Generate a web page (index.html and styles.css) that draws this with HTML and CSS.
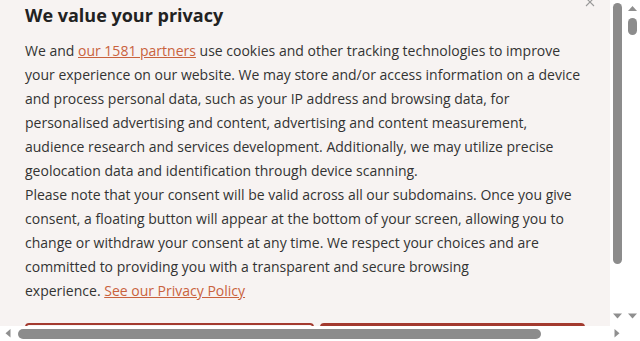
FILE: index.html
```html
<!DOCTYPE html>
<html lang="en">
<head>
<meta charset="utf-8">
<title>Privacy</title>
<link rel="stylesheet" href="styles.css">
</head>
<body>
<div class="screen">
  <div class="viewport">
    <div class="dialog" role="dialog" aria-labelledby="privacy-title">
      <div class="dialog-body">
        <button class="close" aria-label="Close">
          <svg width="10" height="10" viewBox="0 0 10 10"><path d="M1 1 L9 9 M9 1 L1 9" stroke="#9a9a9a" stroke-width="1.1" fill="none"/></svg>
        </button>
        <h2 class="title" id="privacy-title">We value your privacy</h2>
        <div class="text">
          <p>We and <a href="#" class="link">our 1581 partners</a> use cookies and other tracking technologies to improve your experience on our website. We may store and/or access information on a device and process personal data, such as your IP address and browsing data, for personalised advertising and content, advertising and content measurement, audience research and services development. Additionally, we may utilize precise geolocation data and identification through device scanning.</p>
          <p>Please note that your consent will be valid across all our subdomains. Once you give consent, a floating button will appear at the bottom of your screen, allowing you to change or withdraw your consent at any time. We respect your choices and are committed to providing you with a transparent and secure browsing<br>experience. <a href="#" class="link">See our Privacy Policy</a></p>
        </div>
        <div class="actions">
          <button class="btn btn-outline">Manage Preferences</button>
          <button class="btn btn-primary">Accept All</button>
        </div>
      </div>
      <div class="vbar inner-bar">
        <div class="thumb-v inner-thumb"></div>
        <div class="fill"></div>
        <svg class="arrow" width="15" height="15" viewBox="0 0 15 15"><polygon points="3,2.5 12,2.5 7.5,7.5" fill="#8f8f8f"/></svg>
      </div>
    </div>
  </div>
  <div class="vbar outer-bar">
    <svg class="arrow" width="15" height="15" viewBox="0 0 15 15"><polygon points="3,11 12,11 7.5,6" fill="#8f8f8f"/></svg>
    <div class="thumb-v outer-thumb"></div>
    <div class="fill"></div>
    <svg class="arrow" width="15" height="15" viewBox="0 0 15 15"><polygon points="3,2.5 12,2.5 7.5,7.5" fill="#8f8f8f"/></svg>
  </div>
  <div class="hbar">
    <svg class="arrow" width="15" height="15" viewBox="0 0 15 15"><polygon points="10.5,3 10.5,11.5 5.5,7.25" fill="#8f8f8f"/></svg>
    <div class="thumb-h"></div>
    <div class="fill"></div>
    <svg class="arrow" width="15" height="15" viewBox="0 0 15 15"><polygon points="4.5,3 4.5,11.5 9.5,7.25" fill="#8f8f8f"/></svg>
  </div>
  <div class="corner"></div>
</div>
</body>
</html>
```

FILE: styles.css
```css
html, body {
  margin: 0;
  padding: 0;
  background: #ffffff;
  overflow: hidden;
}

.screen {
  display: grid;
  grid-template-columns: 625px 15px;
  grid-template-rows: 326px 15px;
  width: 640px;
  height: 341px;
}

.viewport {
  overflow: hidden;
}

.dialog {
  display: flex;
  height: 326px;
}

.dialog-body {
  position: relative;
  box-sizing: border-box;
  width: 610px;
  height: 326px;
  padding: 3px 25px 0;
  overflow: hidden;
  background: #f7f3f2;
  font-family: "Open Sans", "Liberation Sans", sans-serif;
  color: #333333;
}

.close {
  position: absolute;
  top: -3px;
  left: 585px;
  width: 10px;
  height: 10px;
  padding: 0;
  border: 0;
  background: none;
  line-height: 0;
}

.title {
  margin: 0;
  font-size: 18px;
  line-height: 24px;
  font-weight: 700;
  color: #222222;
}

.text {
  margin-top: 12px;
  font-size: 14px;
  line-height: 24px;
}

.text p {
  margin: 0;
}

.link {
  color: #c9623d;
  text-decoration: underline;
}

.actions {
  display: grid;
  grid-template-columns: 289px 1fr;
  gap: 6px;
  margin-top: 20px;
}

.btn {
  height: 44px;
  border-radius: 4px;
  font-family: "Open Sans", "Liberation Sans", sans-serif;
  font-size: 14px;
  font-weight: 600;
}

.btn-outline {
  border: 2px solid #a33a2f;
  background: transparent;
  color: #a33a2f;
}

.btn-primary {
  border: 2px solid #a33a2f;
  background: #a33a2f;
  color: #ffffff;
}

/* scrollbars */
.vbar {
  display: flex;
  flex-direction: column;
  align-items: center;
  width: 15px;
  background: #ffffff;
}

.inner-bar {
  height: 326px;
}

.fill {
  flex: 1;
}

.arrow {
  display: block;
  flex: none;
}

.thumb-v {
  width: 9px;
  border-radius: 5px;
  background: #8c8c8c;
  flex: none;
}

.inner-thumb {
  margin-top: 3px;
  height: 261px;
}

.outer-thumb {
  margin-top: 3px;
  height: 17px;
}

.hbar {
  display: flex;
  align-items: center;
  height: 15px;
  background: #ffffff;
}

.thumb-h {
  flex: none;
  width: 523px;
  height: 10px;
  margin-left: 3px;
  border-radius: 5px;
  background: #8c8c8c;
}

.corner {
  background: #ffffff;
}
```
